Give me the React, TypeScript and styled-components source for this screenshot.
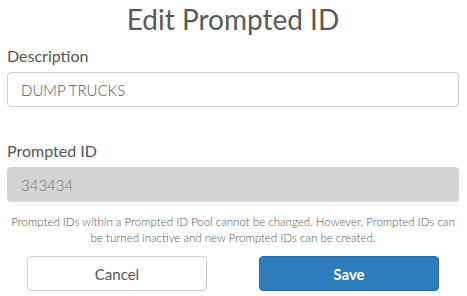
import React, { useState } from 'react';
import styled, { createGlobalStyle } from 'styled-components';

const GlobalStyle = createGlobalStyle`
  html, body {
    margin: 0;
    padding: 0;
    background: #ffffff;
  }
  body {
    font-family: Lato, 'Open Sans', 'Liberation Sans', sans-serif;
    color: #555555;
  }
  * {
    box-sizing: border-box;
  }
`;

const Dialog = styled.div`
  width: 467px;
  padding: 2px 8px 0 7px;
  display: flex;
  flex-direction: column;
`;

const Title = styled.h1`
  margin: 0;
  font-size: 28px;
  line-height: 34px;
  font-weight: 400;
  text-align: center;
  color: #5a5a5a;
`;

const Field = styled.div<{ $gap?: number }>`
  display: flex;
  flex-direction: column;
  margin-top: ${({ $gap }) => $gap ?? 0}px;
`;

const Label = styled.label`
  font-size: 16px;
  line-height: 20px;
  color: #555555;
  margin-bottom: 6px;
`;

const Input = styled.input`
  width: 100%;
  height: 35px;
  padding: 0 13px;
  border: 1px solid #cccccc;
  border-radius: 4px;
  font-family: inherit;
  font-size: 15px;
  font-weight: 300;
  color: #555555;
  background: ${({ disabled }) => (disabled ? '#d4d4d4' : '#ffffff')};
  outline: none;
  &:disabled {
    color: #777777;
    border-color: #d4d4d4;
  }
`;

const Hint = styled.p`
  margin: 12px -4px 0;
  font-size: 11.5px;
  line-height: 16px;
  font-weight: 300;
  text-align: center;
  color: #555555;
`;

const Actions = styled.div`
  display: flex;
  justify-content: center;
  gap: 52px;
  margin-top: 10px;
`;

const Button = styled.button<{ $primary?: boolean }>`
  width: 180px;
  height: 35px;
  border-radius: 4px;
  font-family: inherit;
  font-size: 15px;
  cursor: pointer;
  border: 1px solid ${({ $primary }) => ($primary ? '#2a6ca6' : '#cccccc')};
  background: ${({ $primary }) => ($primary ? '#2e7bbd' : '#ffffff')};
  color: ${({ $primary }) => ($primary ? '#ffffff' : '#555555')};
  font-weight: ${({ $primary }) => ($primary ? 700 : 400)};
`;

export default function App() {
  const [description, setDescription] = useState('DUMP TRUCKS');

  return (
    <>
      <GlobalStyle />
      <Dialog>
        <Title>Edit Prompted ID</Title>
        <Field $gap={10}>
          <Label>Description</Label>
          <Input value={description} onChange={e => setDescription(e.target.value)} />
        </Field>
        <Field $gap={34}>
          <Label>Prompted ID</Label>
          <Input value="343434" disabled readOnly />
        </Field>
        <Hint>
          Prompted IDs within a Prompted ID Pool cannot be changed. However, Prompted IDs can
          <br />
          be turned inactive and new Prompted IDs can be created.
        </Hint>
        <Actions>
          <Button type="button">Cancel</Button>
          <Button type="button" $primary>Save</Button>
        </Actions>
      </Dialog>
    </>
  );
}
